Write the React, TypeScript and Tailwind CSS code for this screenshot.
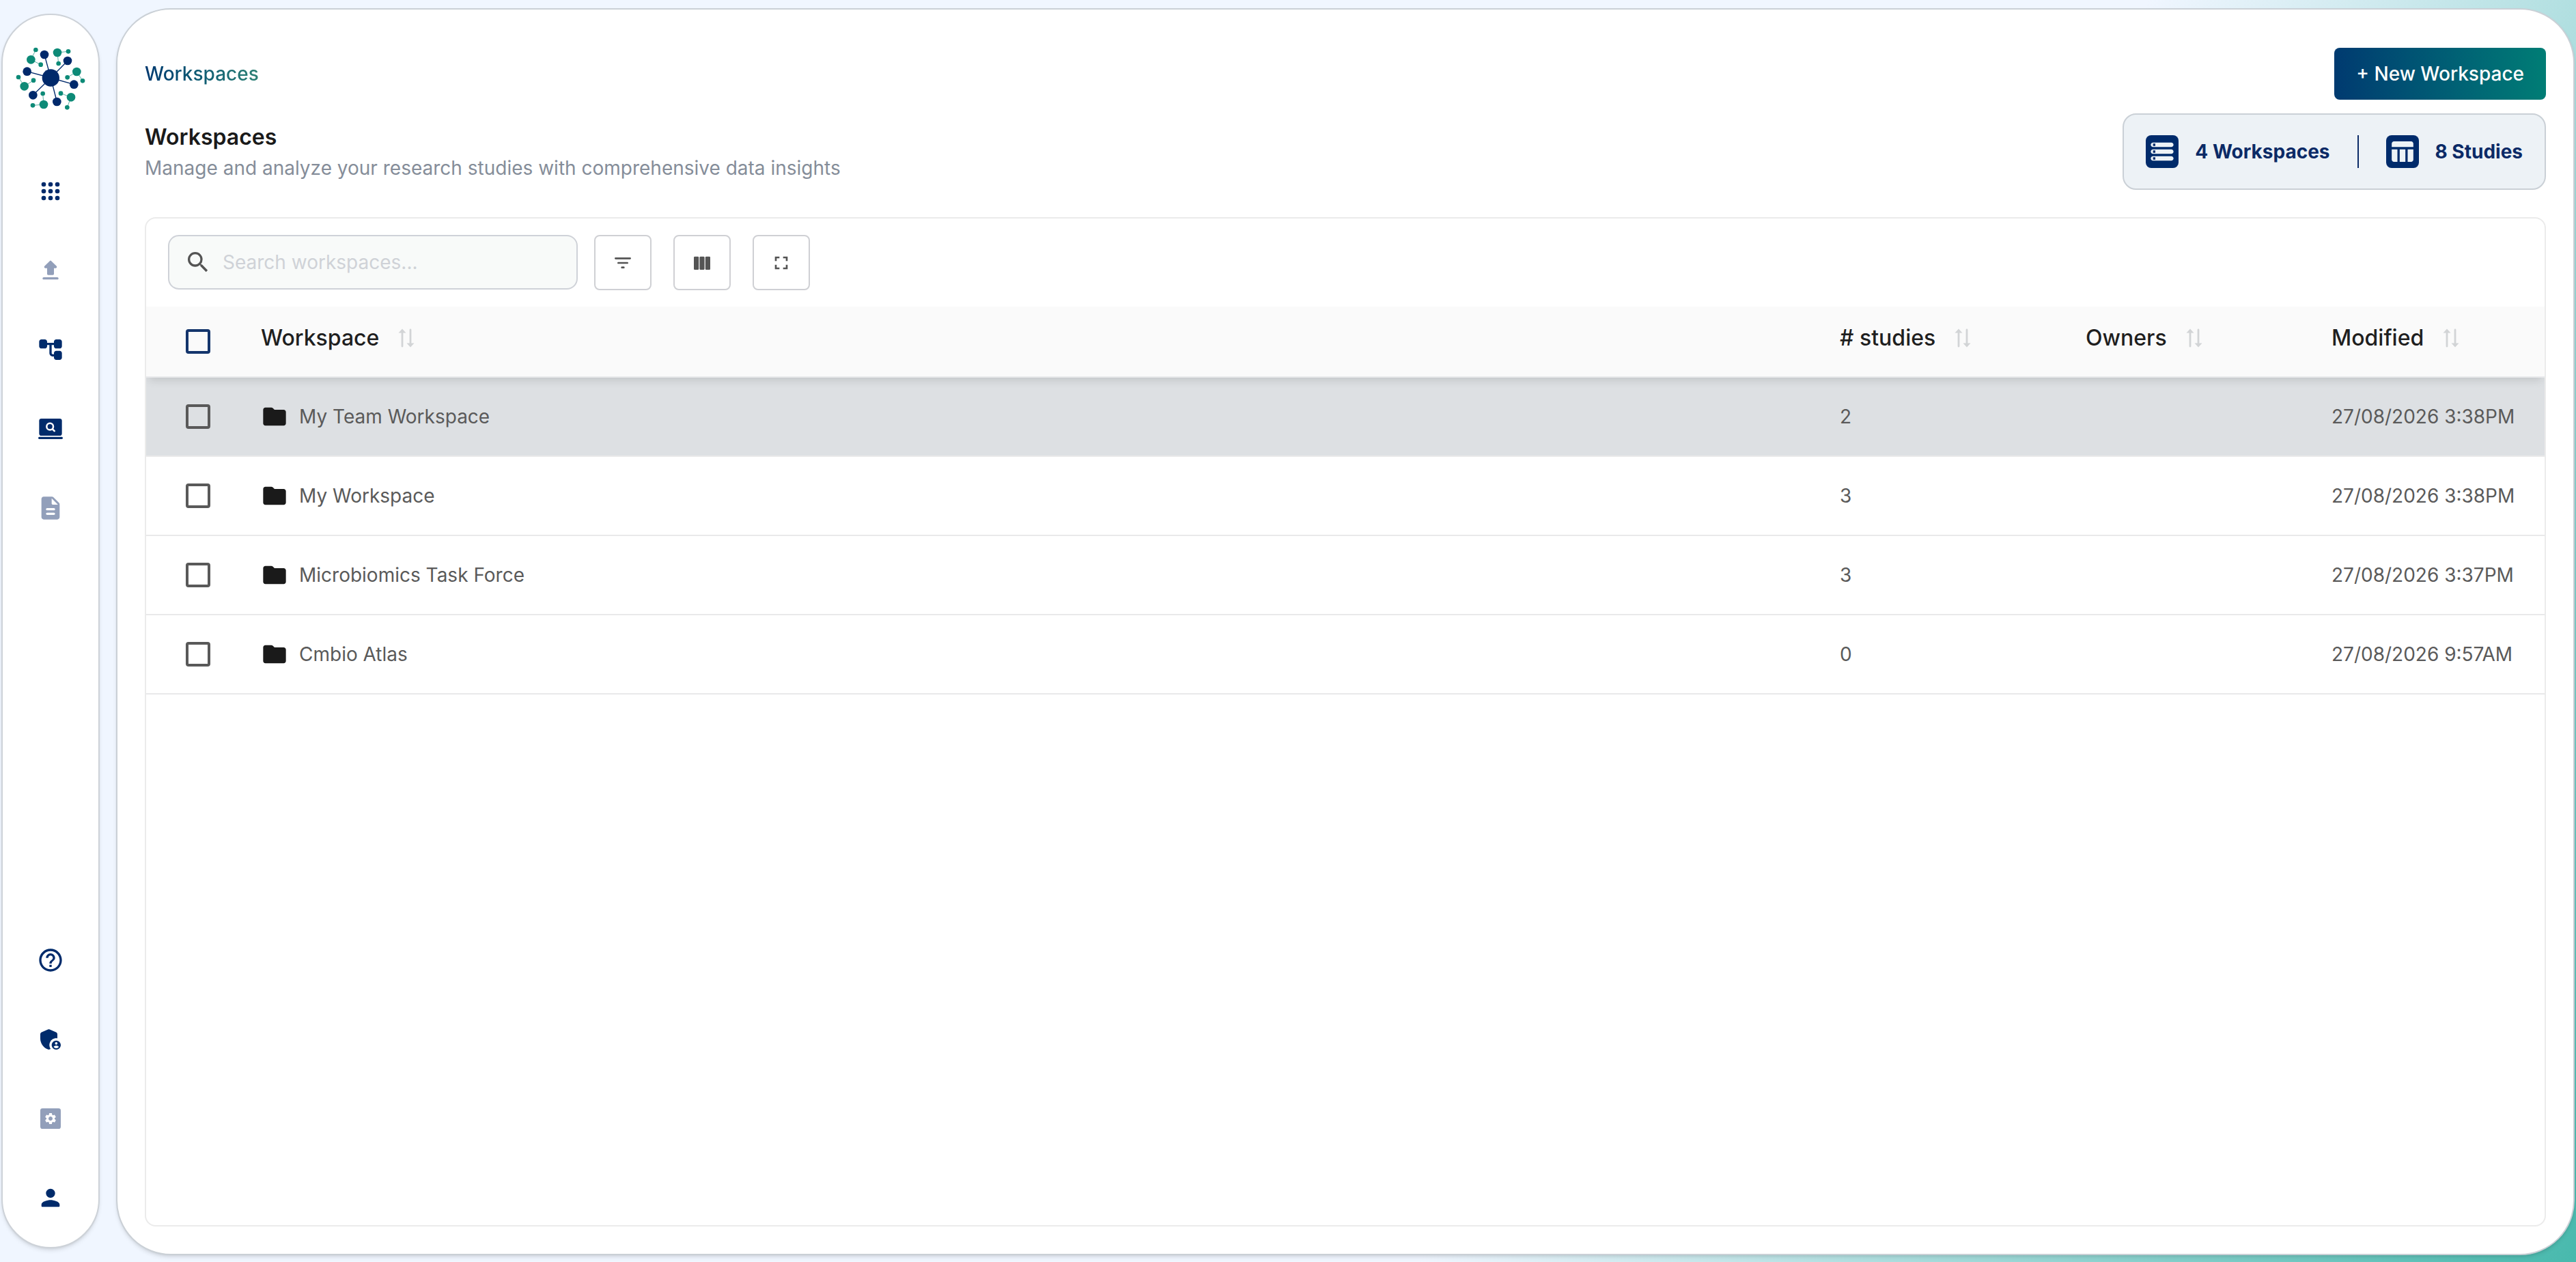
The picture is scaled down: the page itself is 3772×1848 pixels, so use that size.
import { useState } from 'react'
import type { ReactNode } from 'react'
import { MdFullscreen, MdHelpOutline, MdSearch } from 'react-icons/md'

interface Workspace {
  name: string
  studies: number
  owners: string
  modified: string
}

const WORKSPACES: Workspace[] = [
  { name: 'My Team Workspace', studies: 2, owners: '', modified: '27/08/2026 3:38PM' },
  { name: 'My Workspace', studies: 3, owners: '', modified: '27/08/2026 3:38PM' },
  { name: 'Microbiomics Task Force', studies: 3, owners: '', modified: '27/08/2026 3:37PM' },
  { name: 'Cmbio Atlas', studies: 0, owners: '', modified: '27/08/2026 9:57AM' },
]

const COLUMNS = ['Workspace', '# studies', 'Owners', 'Modified']

function Glyph({ children, className = 'size-10' }: { children: ReactNode; className?: string }) {
  return (
    <svg viewBox="0 0 24 24" fill="currentColor" className={className} aria-hidden="true">
      {children}
    </svg>
  )
}

// hub with six spokes, and six small clusters between them
const SPOKES = [
  [198, 240],
  [300, 267],
  [328, 371],
  [253, 447],
  [148, 418],
  [122, 314],
]

const CLUSTERS = [
  [[139, 262], [160, 219], [182, 284]],
  [[255, 231], [303, 226], [260, 279]],
  [[340, 315], [299, 340], [366, 355]],
  [[315, 427], [270, 410], [298, 472]],
  [[195, 459], [191, 411], [147, 463]],
  [[110, 379], [84, 339], [150, 353]],
]

function Logo() {
  return (
    <svg viewBox="72 204 306 282" className="h-[94px] w-[102px]" role="img" aria-label="Home">
      {SPOKES.map(([x, y]) => (
        <g key={`${x}-${y}`}>
          <line x1="226" y1="342" x2={x} y2={y} stroke="#00296b" strokeWidth="4" />
          <circle cx={x} cy={y} r="19" fill="#00296b" />
        </g>
      ))}
      {CLUSTERS.map(([hub, a, b]) => (
        <g key={hub.join('-')} fill="#0d8a77" stroke="#0d8a77">
          <line x1={hub[0]} y1={hub[1]} x2={a[0]} y2={a[1]} strokeWidth="2" />
          <line x1={hub[0]} y1={hub[1]} x2={b[0]} y2={b[1]} strokeWidth="2" />
          <circle cx={hub[0]} cy={hub[1]} r="19" stroke="none" />
          <circle cx={a[0]} cy={a[1]} r="10" stroke="none" />
          <circle cx={b[0]} cy={b[1]} r="10" stroke="none" />
        </g>
      ))}
      <circle cx="226" cy="342" r="38" fill="#00296b" />
    </svg>
  )
}

function AppsIcon() {
  return (
    <Glyph>
      {[6, 12, 18].map((y) => [6, 12, 18].map((x) => <circle key={`${x}-${y}`} cx={x} cy={y} r="2" />))}
    </Glyph>
  )
}

function UploadIcon() {
  return (
    <Glyph>
      <path d="M7.4 10H9v5c0 .55.45 1 1 1h4c.55 0 1-.45 1-1v-5h1.59c.89 0 1.34-1.08.71-1.71L12.7 3.7a.996.996 0 0 0-1.41 0L6.7 8.29c-.63.63-.19 1.71.7 1.71M5 19c0 .55.45 1 1 1h12c.55 0 1-.45 1-1s-.45-1-1-1H6c-.55 0-1 .45-1 1" />
    </Glyph>
  )
}

function TreeIcon() {
  return (
    <Glyph>
      <path d="M22 9V5c0-1.1-.9-2-2-2h-3c-1.1 0-2 .9-2 2v1H9V5c0-1.1-.9-2-2-2H4c-1.1 0-2 .9-2 2v4c0 1.1.9 2 2 2h3c1.1 0 2-.9 2-2V8h2v7c0 1.65 1.35 3 3 3h1v1c0 1.1.9 2 2 2h3c1.1 0 2-.9 2-2v-4c0-1.1-.9-2-2-2h-3c-1.1 0-2 .9-2 2v1h-1c-.55 0-1-.45-1-1V8h2v1c0 1.1.9 2 2 2h3c1.1 0 2-.9 2-2z" />
    </Glyph>
  )
}

function ScreenSearchIcon() {
  return (
    <Glyph>
      <rect x="2" y="3" width="20" height="15" rx="2" />
      <rect x="1.2" y="19" width="21.6" height="2" rx="1" />
      <circle cx="11.5" cy="10" r="2.9" fill="none" stroke="#fff" strokeWidth="1.5" />
      <path d="M13.7 12.2 15.4 13.9" fill="none" stroke="#fff" strokeWidth="1.6" strokeLinecap="round" />
    </Glyph>
  )
}

function DocumentIcon() {
  return (
    <Glyph>
      <path d="M14.59 2.59c-.38-.38-.89-.59-1.42-.59H6c-1.1 0-2 .9-2 2v16c0 1.1.89 2 1.99 2H18c1.1 0 2-.9 2-2V8.83c0-.53-.21-1.04-.59-1.41zM15 18H9c-.55 0-1-.45-1-1s.45-1 1-1h6c.55 0 1 .45 1 1s-.45 1-1 1m0-4H9c-.55 0-1-.45-1-1s.45-1 1-1h6c.55 0 1 .45 1 1s-.45 1-1 1m-2-6V3.5L18.5 9H14c-.55 0-1-.45-1-1" />
    </Glyph>
  )
}

function AdminIcon() {
  return (
    <Glyph>
      <path d="M17 11c.34 0 .67.04 1 .09V7.58c0-.8-.47-1.52-1.2-1.83l-5.5-2.4c-.51-.22-1.09-.22-1.6 0l-5.5 2.4C3.47 6.07 3 6.79 3 7.58v3.6c0 4.54 3.2 8.79 7.5 9.82.55-.13 1.08-.32 1.6-.55-.69-.98-1.1-2.17-1.1-3.45 0-3.31 2.69-6 6-6" />
      <path
        fillRule="evenodd"
        d="M17 13c-2.21 0-4 1.79-4 4s1.79 4 4 4 4-1.79 4-4-1.79-4-4-4m0 1.38c.62 0 1.12.51 1.12 1.12s-.51 1.12-1.12 1.12-1.12-.51-1.12-1.12.5-1.12 1.12-1.12m0 5.37c-.93 0-1.74-.46-2.24-1.17.05-.72 1.51-1.08 2.24-1.08s2.19.36 2.24 1.08c-.5.71-1.31 1.17-2.24 1.17"
      />
    </Glyph>
  )
}

function SettingsIcon() {
  return (
    <Glyph>
      <rect x="3" y="3" width="18" height="18" rx="2" />
      <g transform="translate(6 6) scale(0.5)" fill="#fff">
        <path d="M19.14 12.94c.04-.3.06-.61.06-.94 0-.32-.02-.64-.07-.94l2.03-1.58c.18-.14.23-.41.12-.61l-1.92-3.32c-.12-.22-.37-.29-.59-.22l-2.39.96c-.5-.38-1.03-.7-1.62-.94l-.36-2.54c-.04-.24-.24-.41-.48-.41h-3.84c-.24 0-.43.17-.47.41l-.36 2.54c-.59.24-1.13.57-1.62.94l-2.39-.96c-.22-.08-.47 0-.59.22L2.74 8.87c-.12.21-.08.47.12.61l2.03 1.58c-.05.3-.09.63-.09.94s.02.64.07.94l-2.03 1.58c-.18.14-.23.41-.12.61l1.92 3.32c.12.22.37.29.59.22l2.39-.96c.5.38 1.03.7 1.62.94l.36 2.54c.05.24.24.41.48.41h3.84c.24 0 .44-.17.47-.41l.36-2.54c.59-.24 1.13-.56 1.62-.94l2.39.96c.22.08.47 0 .59-.22l1.92-3.32c.12-.22.07-.47-.12-.61zM12 15.6c-1.98 0-3.6-1.62-3.6-3.6s1.62-3.6 3.6-3.6 3.6 1.62 3.6 3.6-1.62 3.6-3.6 3.6" />
      </g>
    </Glyph>
  )
}

function PersonIcon() {
  return (
    <Glyph>
      <path d="M12 12c2.21 0 4-1.79 4-4s-1.79-4-4-4-4 1.79-4 4 1.79 4 4 4m0 2c-2.67 0-8 1.34-8 4v1c0 .55.45 1 1 1h14c.55 0 1-.45 1-1v-1c0-2.66-5.33-4-8-4" />
    </Glyph>
  )
}

function FolderIcon() {
  return (
    <Glyph className="size-10 text-[#1a1a1a]">
      <path d="M10.59 4.59C10.21 4.21 9.7 4 9.17 4H4c-1.1 0-1.99.9-1.99 2L2 18c0 1.1.9 2 2 2h16c1.1 0 2-.9 2-2V8c0-1.1-.9-2-2-2h-8z" />
    </Glyph>
  )
}

function StorageIcon() {
  return (
    <Glyph>
      <path
        fillRule="evenodd"
        d="M4 20h16c1.1 0 2-.9 2-2s-.9-2-2-2H4c-1.1 0-2 .9-2 2s.9 2 2 2m0-3h2v2H4zM2 6c0 1.1.9 2 2 2h16c1.1 0 2-.9 2-2s-.9-2-2-2H4c-1.1 0-2 .9-2 2m4 1H4V5h2zm-2 7h16c1.1 0 2-.9 2-2s-.9-2-2-2H4c-1.1 0-2 .9-2 2s.9 2 2 2m0-3h2v2H4z"
      />
    </Glyph>
  )
}

function TableIcon() {
  return (
    <Glyph>
      <path d="M9.5 10h5v11h-5zM16.5 21h3c1.1 0 2-.9 2-2v-9h-5zM19.5 3h-15c-1.1 0-2 .9-2 2v3h19V5c0-1.1-.9-2-2-2M2.5 19c0 1.1.9 2 2 2h3V10h-5z" />
    </Glyph>
  )
}

function FilterIcon() {
  return (
    <Glyph className="size-8">
      <path d="M11 18h2c.55 0 1-.45 1-1s-.45-1-1-1h-2c-.55 0-1 .45-1 1s.45 1 1 1M3 7c0 .55.45 1 1 1h16c.55 0 1-.45 1-1s-.45-1-1-1H4c-.55 0-1 .45-1 1m4 6h10c.55 0 1-.45 1-1s-.45-1-1-1H7c-.55 0-1 .45-1 1s.45 1 1 1" />
    </Glyph>
  )
}

function ColumnsIcon() {
  return (
    <Glyph className="size-8">
      <rect x="3" y="5" width="5.4" height="14.5" rx="1" />
      <rect x="9.3" y="5" width="5.4" height="14.5" rx="1" />
      <rect x="15.6" y="5" width="5.4" height="14.5" rx="1" />
    </Glyph>
  )
}

function SortIcon() {
  return (
    <svg viewBox="0 0 24 28" className="h-7 w-6 text-[#d2d4d6]" fill="currentColor" aria-hidden="true">
      <path d="M0.5 6.5 6 0.5l5.5 6H7.4V26a1.4 1.4 0 0 1-2.8 0V6.5z" />
      <path d="M12.5 21.5 18 27.5l5.5-6h-4.1V2a1.4 1.4 0 0 0-2.8 0v19.5z" />
    </svg>
  )
}

function NavButton({ label, disabled, children }: { label: string; disabled?: boolean; children: ReactNode }) {
  return (
    <button type="button" aria-label={label} disabled={disabled} className="text-[#002b6b] disabled:text-[#929fba]">
      {children}
    </button>
  )
}

function Sidebar() {
  return (
    <aside className="my-5 flex w-36 shrink-0 flex-col items-center rounded-full border-2 border-[#cdd2d8] bg-white pt-[46px] pb-[52px] shadow-md">
      <Logo />
      <nav className="mt-[98px] flex flex-1 flex-col gap-[76px]">
        <NavButton label="Workspaces">
          <AppsIcon />
        </NavButton>
        <NavButton label="Upload" disabled>
          <UploadIcon />
        </NavButton>
        <NavButton label="Pipelines">
          <TreeIcon />
        </NavButton>
        <NavButton label="Explore">
          <ScreenSearchIcon />
        </NavButton>
        <NavButton label="Reports" disabled>
          <DocumentIcon />
        </NavButton>
      </nav>
      <div className="flex flex-col gap-[76px]">
        <NavButton label="Help">
          <MdHelpOutline className="size-10" />
        </NavButton>
        <NavButton label="Admin">
          <AdminIcon />
        </NavButton>
        <NavButton label="Settings" disabled>
          <SettingsIcon />
        </NavButton>
        <NavButton label="Profile">
          <PersonIcon />
        </NavButton>
      </div>
    </aside>
  )
}

function Stat({ icon, children }: { icon: ReactNode; children: ReactNode }) {
  return (
    <div className="flex items-center gap-6">
      <span className="flex size-12 items-center justify-center rounded-lg bg-[#002b6b] text-[#edf2f6]">{icon}</span>
      <span className="text-[28px] leading-[42px] font-bold text-[#0b2a66]">{children}</span>
    </div>
  )
}

function ToolButton({ label, children }: { label: string; children: ReactNode }) {
  return (
    <button
      type="button"
      aria-label={label}
      className="flex h-[81px] w-[84px] items-center justify-center rounded-lg border-2 border-[#cfd0d4] bg-white text-[#545454]"
    >
      {children}
    </button>
  )
}

interface CheckboxProps {
  label: string
  checked: boolean
  onChange: () => void
  className: string
}

function Checkbox({ label, checked, onChange, className }: CheckboxProps) {
  return (
    <input
      type="checkbox"
      aria-label={label}
      checked={checked}
      onChange={onChange}
      className={`block size-9 appearance-none rounded border-4 checked:bg-current ${className}`}
    />
  )
}

function WorkspaceTable({ rows }: { rows: Workspace[] }) {
  const [selected, setSelected] = useState<string[]>([])
  const allSelected = rows.length > 0 && selected.length === rows.length

  const toggle = (name: string) =>
    setSelected((prev) => (prev.includes(name) ? prev.filter((n) => n !== name) : [...prev, name]))

  return (
    <table className="w-full table-fixed border-separate border-spacing-0 text-left">
      <colgroup>
        <col className="w-[136px]" />
        <col />
        <col className="w-[360px]" />
        <col className="w-[360px]" />
        <col className="w-[344px]" />
      </colgroup>
      <thead className="relative z-10 shadow-[0_8px_12px_-4px_rgba(0,0,0,0.12)]">
        <tr className="h-[104px] bg-[#fafafa]">
          <th className="border-b-2 border-[#e9eaec] pl-[58px]">
            <Checkbox
              label="Select all"
              checked={allSelected}
              onChange={() => setSelected(allSelected ? [] : rows.map((r) => r.name))}
              className="border-[#14356c]"
            />
          </th>
          {COLUMNS.map((col) => (
            <th key={col} className="border-b-2 border-[#e9eaec] px-8 pt-[22px] align-top font-medium">
              <button type="button" className="flex items-center gap-7 text-[32px] leading-[48px] text-[#1f1f1f]">
                {col}
                <SortIcon />
              </button>
            </th>
          ))}
        </tr>
      </thead>
      <tbody className="text-[28px] leading-[42px] text-[#5a5a5a]">
        {rows.map((row) => (
          <tr key={row.name} className="h-[116px] first:bg-[#dde0e3]">
            <td className="border-b-2 border-[#e9e9ea] pl-[58px]">
              <Checkbox
                label={`Select ${row.name}`}
                checked={selected.includes(row.name)}
                onChange={() => toggle(row.name)}
                className="border-[#595959]"
              />
            </td>
            <td className="border-b-2 border-[#e9e9ea] px-8">
              <div className="flex items-center gap-4">
                <FolderIcon />
                {row.name}
              </div>
            </td>
            <td className="border-b-2 border-[#e9e9ea] px-8">{row.studies}</td>
            <td className="border-b-2 border-[#e9e9ea] px-8">{row.owners}</td>
            <td className="border-b-2 border-[#e9e9ea] pl-8 whitespace-nowrap">{row.modified}</td>
          </tr>
        ))}
      </tbody>
    </table>
  )
}

export default function App() {
  const [query, setQuery] = useState('')
  const rows = WORKSPACES.filter((w) => w.name.toLowerCase().includes(query.toLowerCase()))

  return (
    <div className="flex min-h-screen gap-6 bg-[linear-gradient(120deg,#f0f6ff_65%,#48b9ad_100%)] px-[2px] font-['Inter',sans-serif]">
      <Sidebar />
      <main className="mt-3 mb-[10px] flex min-w-0 flex-1 flex-col rounded-[80px] border-2 border-[#cad0d6] bg-white px-10 pt-14 pb-10 shadow-md">
        <div className="flex items-center justify-between">
          <a
            href="#workspaces"
            className="bg-linear-to-r from-[#00386f] to-[#2b8073] bg-clip-text text-[28px] leading-[42px] font-medium text-transparent"
          >
            Workspaces
          </a>
          <button
            type="button"
            className="h-[76px] rounded-lg bg-linear-to-r from-[#003a70] to-[#007d75] px-8 text-[28px] leading-[42px] font-medium text-white"
          >
            + New Workspace
          </button>
        </div>

        <div className="mt-5 flex items-center justify-between">
          <div>
            <h1 className="text-[32px] leading-[48px] font-semibold text-[#1a1a1a]">Workspaces</h1>
            <p className="text-[28px] leading-[42px] text-[#858d99]">
              Manage and analyze your research studies with comprehensive data insights
            </p>
          </div>
          <div className="flex h-28 items-center gap-10 rounded-[20px] border-2 border-[#cad0d6] bg-[#edf2f6] px-8">
            <Stat icon={<StorageIcon />}>4 Workspaces</Stat>
            <div className="h-12 w-[2px] bg-[#0b2a66]" />
            <Stat icon={<TableIcon />}>8 Studies</Stat>
          </div>
        </div>

        <section className="mt-10 flex-1 overflow-hidden rounded-2xl border-2 border-[#ebebeb]">
          <div className="flex gap-8 px-8 py-6">
            <label className="-mr-2 flex h-20 w-[600px] items-center gap-4 rounded-2xl border-2 border-[#cfd2d8] bg-[#f8faf9] px-[22px]">
              <MdSearch className="size-10 text-[#545454]" />
              <input
                type="text"
                aria-label="Search workspaces"
                placeholder="Search workspaces..."
                value={query}
                onChange={(e) => setQuery(e.target.value)}
                className="min-w-0 flex-1 bg-transparent text-[28px] leading-[42px] text-[#1a1a1a] outline-none placeholder:text-[#cfd2d7]"
              />
            </label>
            <ToolButton label="Filter">
              <FilterIcon />
            </ToolButton>
            <ToolButton label="Columns">
              <ColumnsIcon />
            </ToolButton>
            <ToolButton label="Full screen">
              <MdFullscreen className="size-8" />
            </ToolButton>
          </div>
          <WorkspaceTable rows={rows} />
        </section>
      </main>
    </div>
  )
}
